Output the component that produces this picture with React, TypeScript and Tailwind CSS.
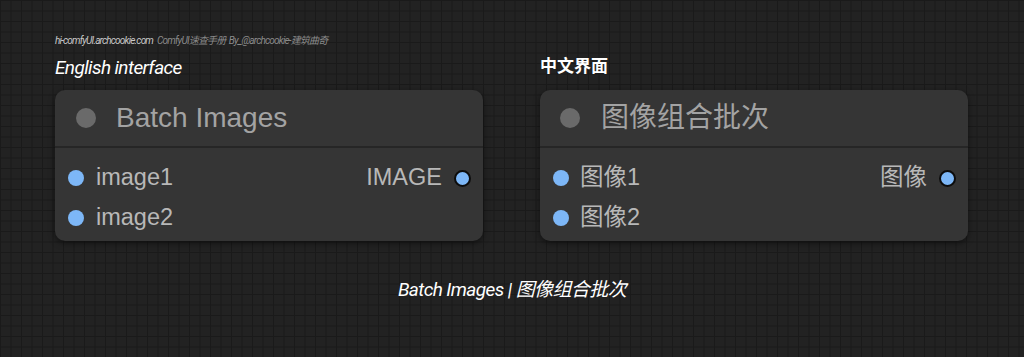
const cjk = "font-['Roboto','Noto_Sans_CJK_SC',sans-serif]";

function Dot({ out }: { out?: boolean }) {
  return out ? (
    <span className="block h-[17px] w-[17px] rounded-full border-2 border-[#0d0d0d] bg-[#7db7f7]" />
  ) : (
    <span className="block h-[16px] w-[16px] rounded-full bg-[#7db7f7]" />
  );
}

interface NodeProps {
  title: string;
  inputs: string[];
  output: string;
  zh?: boolean;
}

function Node({ title, inputs, output, zh }: NodeProps) {
  const font = zh
    ? "font-['Liberation_Sans','Noto_Sans_CJK_SC',sans-serif]"
    : "font-['Liberation_Sans',Arial,sans-serif]";
  return (
    <div className={`w-[428px] h-[151px] rounded-[10px] bg-[#353535] shadow-[0_2px_6px_rgba(0,0,0,0.5)] overflow-hidden ${font}`}>
      {/* header */}
      <div className="h-[58px] flex items-center border-b-2 border-[#262626]">
        <span className={`block h-[20px] w-[20px] rounded-full bg-[#6a6a6a] ${zh ? 'ml-[20px]' : 'ml-[21px]'}`} />
        <span className={`text-[28px] text-[#a3a3a3] leading-none ${zh ? 'ml-[21px]' : 'ml-[20px]'}`}>{title}</span>
      </div>
      {/* slots */}
      <div className="pt-[21px] flex">
        <div className="flex flex-col gap-[22px]">
          {inputs.map((label) => (
            <div key={label} className="flex items-center h-[18px]">
              <span className="ml-[13px]"><Dot /></span>
              <span className={`text-[23.5px] text-[#b8b8b8] leading-none ${zh ? 'ml-[11px]' : 'ml-[12px]'}`}>{label}</span>
            </div>
          ))}
        </div>
        <div className="ml-auto flex items-center h-[18px] mr-[12px]">
          <span className="text-[23.5px] text-[#b8b8b8] leading-none mr-[12px]">{output}</span>
          <Dot out />
        </div>
      </div>
    </div>
  );
}

export default function App() {
  return (
    <div
      className="w-[1024px] h-[357px] bg-[#222222] bg-[linear-gradient(to_right,#1a1a1a_1px,transparent_1px),linear-gradient(to_bottom,#1a1a1a_1px,transparent_1px)] bg-[size:10.5px_10.5px] flex flex-col pl-[55px] pt-[33px]"
    >
      {/* credit line */}
      <div className={`h-[14px] flex items-center italic text-[10px] tracking-[-0.8px] ${cjk}`}>
        <span className="text-[#c8c8c8]">hi-comfyUI.archcookie.com</span>
        <span className="ml-[4px] text-[#8a8a8a]">ComfyUI速查手册&nbsp;&nbsp;By_@archcookie-建筑曲奇</span>
      </div>

      <div className="flex gap-[57px] mt-[9px]">
        <div className="flex flex-col">
          <div className={`h-[26px] italic text-[19px] text-white tracking-[-0.6px] leading-none pt-[2px] ${cjk}`}>
            English interface
          </div>
          <div className="mt-[8px]">
            <Node title="Batch Images" inputs={['image1', 'image2']} output="IMAGE" />
          </div>
        </div>
        <div className="flex flex-col">
          <div className={`h-[26px] text-[17px] font-bold text-white leading-none pt-[2px] ${cjk}`}>
            中文界面
          </div>
          <div className="mt-[8px]">
            <Node title="图像组合批次" inputs={['图像1', '图像2']} output="图像" zh />
          </div>
        </div>
      </div>

      <div className={`-ml-[55px] mt-[39px] text-center italic text-[19px] text-white tracking-[-0.6px] leading-none ${cjk}`}>
        Batch Images | 图像组合批次
      </div>
    </div>
  );
}
